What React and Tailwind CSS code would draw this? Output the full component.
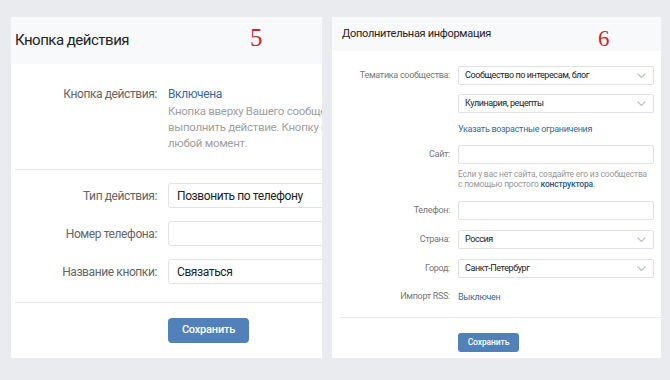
import React from 'react';

function Chevron() {
  return (
    <svg width="9" height="6" viewBox="0 0 9 6" fill="none" stroke="#b8c1cc" strokeWidth="1.2" className="shrink-0">
      <path d="M1 1l3.5 3.5L8 1" strokeLinecap="round" />
    </svg>
  );
}

function LeftRow({ label, value }) {
  return (
    <div className="flex items-center mt-[13px]">
      <div className="w-[146px] shrink-0 text-right text-[12px] tracking-[-0.4px] text-[#656565]">{label}</div>
      <div className="ml-[11px] h-[25px] w-[220px] shrink-0 border border-[#dfe2e6] rounded-[3px] bg-white flex items-center pl-[8px] text-[12px] tracking-[-0.4px] text-[#222]">
        {value}
      </div>
    </div>
  );
}

function RightRow({ label, children, className = '' }) {
  return (
    <div className={`flex items-center ${className}`}>
      <div className="w-[118px] shrink-0 text-right text-[9px] tracking-[-0.3px] text-[#777]">{label}</div>
      <div className="ml-[8px] w-[196px] shrink-0">{children}</div>
    </div>
  );
}

function Field({ value, select }) {
  return (
    <div className="h-[19px] border border-[#dfe2e6] rounded-[2px] bg-white flex items-center justify-between pl-[6px] pr-[7px] text-[9px] tracking-[-0.4px] text-[#222]">
      <span>{value}</span>
      {select && <Chevron />}
    </div>
  );
}

export default function App() {
  return (
    <div className="w-[670px] h-[380px] bg-[#e9ebee] flex pt-[17px] pl-[11px] gap-[10px] font-['Roboto',sans-serif]">
      {/* panel 5 */}
      <div className="w-[311px] h-[341px] bg-white overflow-hidden relative flex flex-col">
        <div className="h-[47px] shrink-0 bg-[#f8f9fb] flex items-center pl-[4px] text-[15px] tracking-[-0.5px] text-[#222]">
          Кнопка действия
        </div>
        <span className="absolute left-[239px] top-[8px] text-[25px] leading-none text-[#c62b2b] font-['Liberation_Serif',serif]">5</span>

        <div className="flex mt-[21px]">
          <div className="w-[146px] shrink-0 text-right text-[12px] tracking-[-0.4px] text-[#656565] leading-[18px]">Кнопка действия:</div>
          <div className="ml-[11px] shrink-0 whitespace-nowrap">
            <div className="text-[12px] tracking-[-0.4px] leading-[18px] text-[#3b6798]">Включена</div>
            <div className="text-[11.5px] tracking-[-0.3px] leading-[16px] text-[#a0a0a0]">
              <div>Кнопка вверху Вашего сообщества позволит пользователям</div>
              <div>выполнить действие. Кнопку можно отключить в</div>
              <div>любой момент.</div>
            </div>
          </div>
        </div>

        <div className="ml-[4px] mt-[18px] border-t border-[#e7e8ec]" />

        <LeftRow label="Тип действия:" value="Позвонить по телефону" />
        <LeftRow label="Номер телефона:" value="" />
        <LeftRow label="Название кнопки:" value="Связаться" />

        <div className="ml-[4px] mt-[18px] border-t border-[#e7e8ec]" />

        <div className="mt-[13px] ml-[157px]">
          <button className="w-[81px] h-[25px] rounded-[4px] bg-[#5181b8] text-white text-[11px] tracking-[-0.2px] font-medium">
            Сохранить
          </button>
        </div>
      </div>

      {/* panel 6 */}
      <div className="w-[329px] h-[341px] bg-white relative flex flex-col">
        <div className="h-[34px] shrink-0 bg-[#f8f9fb] flex items-center pl-[10px] text-[11px] tracking-[-0.3px] text-[#222]">
          Дополнительная информация
        </div>
        <span className="absolute left-[266px] top-[10px] text-[23px] leading-none text-[#c62b2b] font-['Liberation_Serif',serif]">6</span>

        <RightRow label="Тематика сообщества:" className="mt-[15px]">
          <Field value="Сообщество по интересам, блог" select />
        </RightRow>
        <RightRow label="" className="mt-[9px]">
          <Field value="Кулинария, рецепты" select />
        </RightRow>
        <RightRow label="" className="mt-[8px]">
          <div className="text-[9px] tracking-[-0.3px] leading-[16px] text-[#3b6798]">Указать возрастные ограничения</div>
        </RightRow>
        <RightRow label="Сайт:" className="mt-[8px]">
          <Field value="" />
        </RightRow>
        <RightRow label="" className="mt-[5px]">
          <div className="text-[8.5px] tracking-[-0.2px] leading-[10px] text-[#999] whitespace-nowrap">
            <div>Если у вас нет сайта, создайте его из сообщества</div>
            <div>
              с помощью простого <span className="text-[#2a5885] font-medium">конструктора</span>.
            </div>
          </div>
        </RightRow>
        <RightRow label="Телефон:" className="mt-[12px]">
          <Field value="" />
        </RightRow>
        <RightRow label="Страна:" className="mt-[10px]">
          <Field value="Россия" select />
        </RightRow>
        <RightRow label="Город:" className="mt-[10px]">
          <Field value="Санкт-Петербург" select />
        </RightRow>
        <RightRow label="Импорт RSS:" className="mt-[11px]">
          <div className="text-[9px] tracking-[-0.3px] leading-[16px] text-[#3b6798]">Выключен</div>
        </RightRow>

        <div className="ml-[8px] mt-[12px] border-t border-[#e7e8ec]" />

        <div className="mt-[10px] ml-[126px]">
          <button className="w-[61px] h-[19px] rounded-[3px] bg-[#5181b8] text-white text-[8.5px] tracking-[-0.1px] font-medium">
            Сохранить
          </button>
        </div>
      </div>
    </div>
  );
}
